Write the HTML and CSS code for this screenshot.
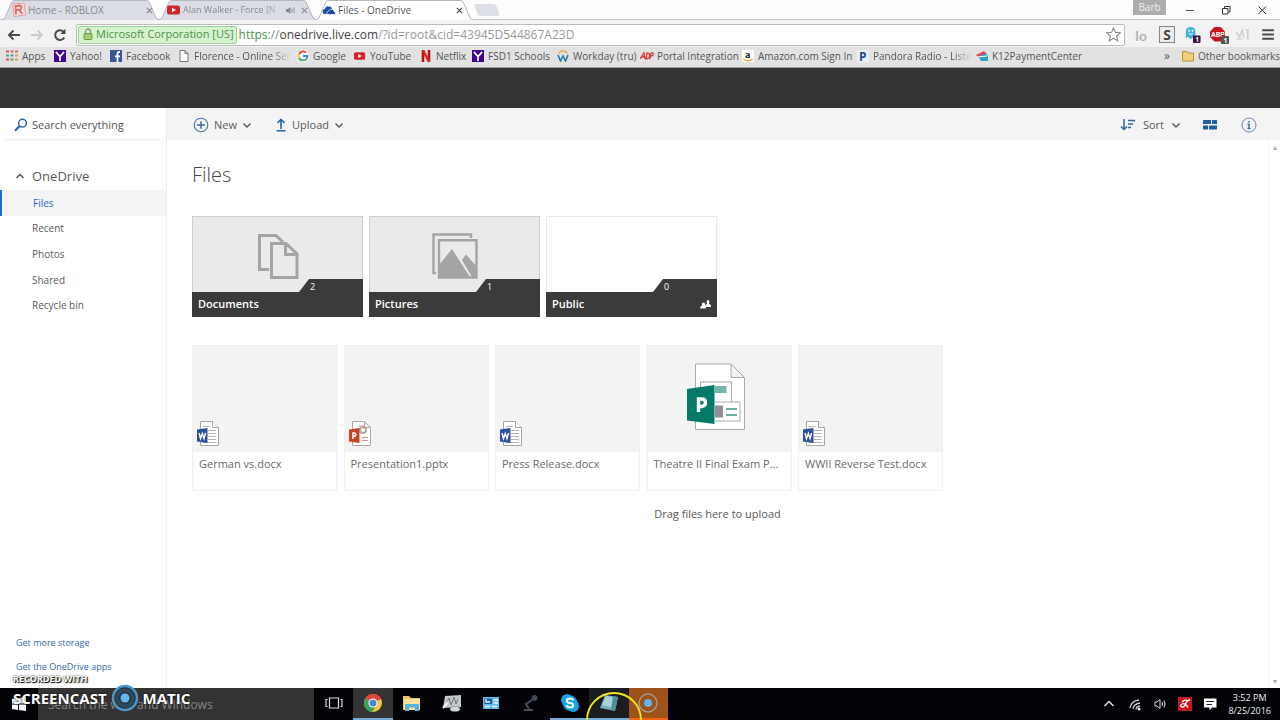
FILE: index.html
```html
<!DOCTYPE html>
<html lang="en">
<head>
<meta charset="utf-8">
<title>Files - OneDrive</title>
<link rel="stylesheet" href="styles.css">
</head>
<body>
<svg class="defs" aria-hidden="true">
  <symbol id="tabshape" viewBox="0 0 160 20" preserveAspectRatio="none"><path d="M0 20 L3 18 L10 2 Q11 .5 13 .5 H147 Q149 .5 150 2 L157 18 L160 20" stroke="#b5b7bb"/></symbol>
  <symbol id="chev" viewBox="0 0 10 10"><path d="M1.500 3.500 L5 7 L8.500 3.500" fill="none" stroke="#555" stroke-width="1.400"/></symbol>
  <symbol id="close" viewBox="0 0 8 8"><path d="M1 1 L7 7 M7 1 L1 7" fill="none" stroke="currentColor" stroke-width="1.300"/></symbol>
  <symbol id="yt" viewBox="0 0 14 12"><rect x="0" y="1.500" width="13" height="9" rx="2" fill="#d0232b"/><path d="M5 3.700 L9 6 L5 8.300 Z" fill="#fff"/></symbol>
  <symbol id="yahoo" viewBox="0 0 13 13"><rect width="13" height="13" fill="#3e0590"/><path d="M2 2 L6.500 7 L11 2 M6.500 7 V12" fill="none" stroke="#fff" stroke-width="1.800"/></symbol>
  <symbol id="word" viewBox="0 0 22 26"><path d="M3.500 .5 H15.500 L21.500 6.500 V24.500 H3.500 Z" fill="#fff" stroke="#a5a5a5"/><path d="M15.500 .5 V6.500 H21.500" fill="#fff" stroke="#a5a5a5"/><path d="M6 5.500 H13 M11 9.500 H19 M11 12.500 H19 M11 15.500 H19 M11 18.500 H19 M6 21.500 H19" stroke="#b5b5b5"/><path d="M0 8.500 L10.500 7 V22 L0 20.500 Z" fill="#2b5099"/><path d="M2 12 L3.500 17.500 L5.300 12.500 L7 17.500 L8.600 12" fill="none" stroke="#fff" stroke-width="1.500"/></symbol>
</svg>

<header class="browser">
  <div class="tabstrip">
    <div class="tab"><svg class="shape"><use href="#tabshape"/></svg>
      <svg class="i14" viewBox="0 0 14 14"><path d="M1 1 L12 0 L13.500 12 L2 13.500 Z" fill="#f8e3e1" stroke="#e39b94"/><path d="M4 11.500 L3.500 3 L8.500 2.500 Q10.500 4 8.500 6.500 L4.500 7 M7 7 L10.500 11" fill="none" stroke="#df6a60" stroke-width="1.800"/></svg>
      <span class="tabtitle">Home - ROBLOX</span><button class="x" aria-label="Close tab"><svg><use href="#close"/></svg></button></div>
    <div class="tab second"><svg class="shape"><use href="#tabshape"/></svg>
      <svg class="i14" viewBox="0 0 14 12"><use href="#yt"/></svg>
      <span class="tabtitle fade">Alan Walker - Force [N</span>
      <svg class="sound" viewBox="0 0 9 9"><path d="M0 3 H2 L4.500 1 V8 L2 6 H0 Z" fill="#888"/><path d="M6 2.500 V6.500 M8 1.500 V7.500" stroke="#999"/></svg>
      <button class="x" aria-label="Close tab"><svg><use href="#close"/></svg></button></div>
    <div class="tab active"><svg class="shape"><use href="#tabshape"/></svg>
      <svg class="i14" viewBox="0 0 14 14"><path d="M1 10 Q-.5 6.500 3 6 Q3.500 2.500 7 3.500 Q10 3.500 10 6 L4.500 11 H2 Z" fill="#1d4fa3"/><path d="M5 11.500 Q4 8.500 6.800 8 Q8 5 10.500 6.500 Q12 7 12 8.500 Q14 9 13.500 11.500 Z" fill="#174ba6" stroke="#fff" stroke-width=".7"/></svg>
      <span class="tabtitle">Files - OneDrive</span><button class="x" aria-label="Close tab"><svg><use href="#close"/></svg></button></div>
    <button class="newtab" aria-label="New tab"></button>
    <div class="winctl">
      <button class="user">Barb</button>
      <button aria-label="Minimize"><svg viewBox="0 0 10 10"><path d="M1 5.500 H9" stroke="#555"/></svg></button>
      <button aria-label="Restore"><svg viewBox="0 0 10 10"><path d="M1.500 3.500 H7 V9 H1.500 Z M3.500 3 V1.500 H9 V7 H7.500" fill="none" stroke="#333"/></svg></button>
      <button aria-label="Close"><svg viewBox="0 0 10 10"><path d="M1.500 1.500 L9 9 M9 1.500 L1.500 9" stroke="#333"/></svg></button>
    </div>
  </div>

  <div class="toolbar">
    <button aria-label="Back"><svg viewBox="0 0 14 14"><path d="M13 7 H2 M6.500 2.500 L2 7 L6.500 11.500" fill="none" stroke="#4a4a4a" stroke-width="2"/></svg></button>
    <button aria-label="Forward"><svg viewBox="0 0 14 14"><path d="M1 7 H12 M7.500 2.500 L12 7 L7.500 11.500" fill="none" stroke="#cbcbcb" stroke-width="1.800"/></svg></button>
    <button aria-label="Reload"><svg viewBox="0 0 14 14"><path d="M11.300 9.500 A4.900 4.900 0 1 1 10.500 3.600" fill="none" stroke="#4a4a4a" stroke-width="2"/><path d="M12.500 .8 V6 H7.300 Z" fill="#4a4a4a"/></svg></button>
    <div class="omnibox">
      <span class="cert"><svg viewBox="0 0 10 12"><path d="M2.500 6 V3.500 Q2.500 1 5 1 T7.500 3.500 V6" fill="none" stroke="#8b9a80" stroke-width="1.300"/><rect x="1" y="5.500" width="8" height="6" rx="1" fill="#a8d06a" stroke="#6b9a4a"/></svg>Microsoft Corporation [US]</span>
      <span class="url"><span class="scheme">https</span><span class="slashes">://</span><span class="host">onedrive.live.com</span>/?id=root&amp;cid=43945D544867A23D</span>
      <svg class="star" viewBox="0 0 14 14"><path d="M7 .8 L8.800 5 L13.300 5.400 L9.900 8.400 L11 12.900 L7 10.500 L3 12.900 L4.100 8.400 L.7 5.400 L5.200 5 Z" fill="#fff" stroke="#888"/></svg>
    </div>
    <div class="ext">
      <svg viewBox="0 0 16 16"><text x="1" y="14" class="t-io">Io</text></svg>
      <svg viewBox="0 0 16 16"><rect x=".5" y=".5" width="14" height="15" fill="#eee" stroke="#888"/><text x="4" y="13" class="t-s">S</text></svg>
      <svg viewBox="0 0 18 18"><path d="M2 13 V5 Q2.500 1 7 1 T12 5 V13 L10 11.500 L7 14 L4 11.500 Z" fill="#45b3dc"/><circle cx="5.500" cy="5" r="1" fill="#fff"/><circle cx="9" cy="5" r="1" fill="#fff"/><path d="M5 8 Q7 10 9.500 8" stroke="#fff" fill="none"/><rect x="9.500" y="10" width="8" height="8" rx="1" fill="#35163f"/><text x="12" y="17" class="t-n">1</text></svg>
      <svg class="abp" viewBox="0 0 20 18"><path d="M5.500 1 H11.500 L16 5.500 V11 L11.500 15.500 H5.500 L1 11 V5.500 Z" fill="#c5161d"/><text x="2" y="11" class="t-abp">ABP</text><rect x="12" y="10" width="8" height="8" rx="1" fill="#4f5650"/><text x="14.500" y="17" class="t-n">1</text></svg>
      <svg viewBox="0 0 16 16"><path d="M2 6 L5 10 L8 4 L9 11 M11 4 Q14 3 12 8 M13 3 V13 M3 12 H8" fill="none" stroke="#cfcfcf" stroke-width="1.500"/></svg>
      <svg viewBox="0 0 16 16"><path d="M3 4 H14 M3 8 H14 M3 12 H14" stroke="#4a4a4a" stroke-width="2"/></svg>
    </div>
  </div>

  <nav class="bookmarks" aria-label="Bookmarks">
    <a href="#"><svg viewBox="0 0 12 12"><path d="M0 1.500 H3 M0 9.500 H3" stroke="#d9534a" stroke-width="2"/><path d="M4.500 1.500 H7.500 M9 1.500 H12" stroke="#d96a63" stroke-width="2"/><path d="M0 5.500 H3 M4.500 9.500 H7.500" stroke="#5aa469" stroke-width="2"/><path d="M4.500 5.500 H7.500" stroke="#5388c9" stroke-width="2"/><path d="M9 5.500 H12 M9 9.500 H12" stroke="#dba348" stroke-width="2"/></svg>Apps</a>
    <a href="#"><svg viewBox="0 0 13 13"><use href="#yahoo"/></svg>Yahoo!</a>
    <a href="#"><svg viewBox="0 0 12 12"><rect width="12" height="12" fill="#3a5795"/><path d="M10 2 H9 Q7.500 2 7.500 3.500 V12 M5 6.300 H10" fill="none" stroke="#fff" stroke-width="1.800"/></svg>Facebook</a>
    <a href="#"><svg viewBox="0 0 12 12"><path d="M2 .5 H7 L10 3.500 V11.500 H2 Z M7 .5 V3.500 H10" fill="#fff" stroke="#777"/></svg><span class="fade">Florence - Online Ser</span></a>
    <a href="#"><svg viewBox="0 0 12 12"><rect width="12" height="12" rx="6" fill="#fff"/><path d="M2 4 A4.500 4.500 0 0 1 9.200 2.700" fill="none" stroke="#e0473c" stroke-width="1.800"/><path d="M2 4 A4.500 4.500 0 0 0 2 8" fill="none" stroke="#efb52a" stroke-width="1.800"/><path d="M2 8 A4.500 4.500 0 0 0 9 9.300" fill="none" stroke="#3ba55a" stroke-width="1.800"/><path d="M9 9.300 Q10.500 8 10.500 6 H6" fill="none" stroke="#4a86e0" stroke-width="1.800"/></svg>Google</a>
    <a href="#"><svg viewBox="0 0 14 12"><use href="#yt"/></svg>YouTube</a>
    <a href="#"><svg viewBox="0 0 12 12"><path d="M3 0 V12 M9 0 V12" stroke="#b3121a" stroke-width="2.600"/><path d="M3 0 L9 12" stroke="#e3222b" stroke-width="2.600"/></svg>Netflix</a>
    <a href="#"><svg viewBox="0 0 13 13"><use href="#yahoo"/></svg>FSD1 Schools</a>
    <a href="#"><svg viewBox="0 0 12 12"><path d="M1.500 3.500 Q6 -2 10.500 3.500" fill="none" stroke="#eda54a" stroke-width="1.500"/><path d="M1 5 L3.500 11 L6 6 L8.500 11 L11 5" fill="none" stroke="#2676ad" stroke-width="1.600"/></svg>Workday (tru)</a>
    <a href="#"><svg class="wide" viewBox="0 0 14 10"><path d="M0 8 L4 2 L5 8 M2 6 H5 M6 8 L7 2 Q11 2 9 7 Z M10 8 L11 2 Q14 1 13 4 Q13 5 11 5" fill="none" stroke="#dd3b40" stroke-width="1.300"/></svg>Portal Integration</a>
    <a href="#"><svg viewBox="0 0 12 12"><rect width="12" height="12" rx="1" fill="#fff"/><text x="3" y="8" class="t-a">a</text><path d="M1 9 Q6 12.500 11 9" fill="none" stroke="#f0a52e" stroke-width="1.300"/></svg>Amazon.com Sign In</a>
    <a href="#"><svg viewBox="0 0 12 12"><rect width="12" height="12" fill="#e8f1f6"/><text x="2" y="11" class="t-p">P</text></svg><span class="fade">Pandora Radio - Liste</span></a>
    <a href="#"><svg viewBox="0 0 12 12"><path d="M0 5 L8 1 L11 4 L3 8 Z" fill="#d94a52"/><path d="M3 7 L9 3 L12 6 V11 H5 Z" fill="#2e9fc4"/><path d="M1 7 L11 6" stroke="#fff"/></svg>K12PaymentCenter</a>
    <button class="more" aria-label="More bookmarks">»</button>
    <a href="#"><svg viewBox="0 0 12 12"><path d="M.5 1.500 H5 L6 3 H11.500 V11 H.5 Z" fill="#f3cf78" stroke="#b8903c"/></svg>Other bookmarks</a>
  </nav>
</header>

<div class="suitebar"></div>

<div class="app">
  <aside class="side">
    <label class="search"><svg viewBox="0 0 14 14"><circle cx="8.500" cy="5.200" r="3.900" fill="none" stroke="#2f62ad" stroke-width="1.500"/><path d="M5.700 8 L1 12.700" stroke="#2f62ad" stroke-width="2"/></svg><input type="text" aria-label="Search everything" placeholder="Search everything"></label>
    <button class="root"><svg viewBox="0 0 10 10"><path d="M1.500 7 L5 3.500 L8.500 7" fill="none" stroke="#555" stroke-width="1.500"/></svg>OneDrive</button>
    <nav class="nav" aria-label="OneDrive">
      <a class="current" href="#">Files</a><a href="#">Recent</a><a href="#">Photos</a><a href="#">Shared</a><a href="#">Recycle bin</a>
    </nav>
    <div class="promo"><a href="#">Get more storage</a><a href="#">Get the OneDrive apps</a></div>
  </aside>

  <main class="main">
    <div class="commands">
      <button><svg class="c16" viewBox="0 0 16 16"><circle cx="8" cy="8" r="6.800" fill="none" stroke="#4775b5" stroke-width="1.100"/><path d="M8 4.200 V11.800 M4.200 8 H11.800" stroke="#3465ac" stroke-width="1.500"/></svg>New<svg class="c10"><use href="#chev"/></svg></button>
      <button><svg class="c12" viewBox="0 0 12 14"><path d="M6 11 V2 M2.500 5 L6 1.500 L9.500 5 M1.500 12.800 H10.500" fill="none" stroke="#2265b5" stroke-width="1.600"/></svg>Upload<svg class="c10"><use href="#chev"/></svg></button>
      <span class="grow"></span>
      <button><svg class="c16" viewBox="0 0 16 14"><path d="M4 1 V11.500 M1 8.500 L4 11.500 L7 8.500 M8 2.500 H15 M8 6 H13 M8 9.500 H11" fill="none" stroke="#2f65ab" stroke-width="1.500"/></svg>Sort<svg class="c10"><use href="#chev"/></svg></button>
      <button aria-label="View"><svg class="c16" viewBox="0 0 16 14"><path d="M1 2 H9 V6 H1 Z M10 2 H15 V6 H10 Z M1 7.500 H6 V11.500 H1 Z M7 7.500 H15 V11.500 H7 Z" fill="#205da8"/></svg></button>
      <button aria-label="Information"><svg class="c16" viewBox="0 0 16 16"><circle cx="8" cy="8" r="7" fill="none" stroke="#6c86ae"/><path d="M8 4 V5.600 M6.500 7.300 H8 V11.500 M6.500 11.500 H9.500" fill="none" stroke="#3465ac" stroke-width="1.400"/></svg></button>
    </div>
    <div class="content">
      <div class="scroll" aria-hidden="true"><span>▴</span><span>▾</span></div>
      <h1>Files</h1>
      <div class="folders">
        <a class="folder" href="#">
          <svg class="art" viewBox="0 0 46 46"><path d="M14 36.500 H4.500 V2.500 H21 L28 9" fill="none" stroke="#a4a4a4" stroke-width="3"/><path d="M16.500 10.500 H31 L42 21 V44.500 H16.500 Z M30.500 10.500 V21.500 H42" fill="#eaeaea" stroke="#a4a4a4" stroke-width="3"/></svg>
          <span class="count">2</span><span class="name">Documents</span></a>
        <a class="folder" href="#">
          <svg class="art" viewBox="0 0 46 46"><path d="M4 40 H1.500 V1.500 H39 V5" fill="none" stroke="#a4a4a4" stroke-width="2.400"/><path d="M7 7.200 H44.500 V44.500 H7 Z" fill="#eaeaea" stroke="#a4a4a4" stroke-width="2.400"/><path d="M7 32 L20 16 L38 44 H7 Z M30 27 L34 21.500 L45 34 V44 H40 Z" fill="#a4a4a4"/></svg>
          <span class="count">1</span><span class="name">Pictures</span></a>
        <a class="folder blank" href="#">
          <span class="count">0</span><span class="name">Public<svg class="people" viewBox="0 0 11 10"><path d="M5 8 Q5 5 7 5 Q6 1 8 1 T9 5 Q11 5 11 8 Z M0 9.500 Q0 7 2 6.500 Q1.500 3.500 3.500 3.500 T5 6.500 Q6 7 6 9.500 Z" fill="#fff"/></svg></span></a>
      </div>
      <div class="files">
        <a class="file" href="#"><span class="thumb"><svg><use href="#word"/></svg></span><span class="fname">German vs.docx</span></a>
        <a class="file" href="#"><span class="thumb"><svg viewBox="0 0 22 26"><path d="M3.500 .5 H15.500 L21.500 6.500 V24.500 H3.500 Z M15.500 .5 V6.500 H21.500" fill="#fff" stroke="#b3a5a2"/><circle cx="14" cy="9" r="3" fill="none" stroke="#b3a5a2" stroke-width="2"/><path d="M10 5 H15 V8 M13 16.500 H19 M13 19.500 H19" fill="none" stroke="#dc9385"/><path d="M0 8.500 L10.500 7 V22 L0 20.500 Z" fill="#c9432b"/><path d="M4 18 V12 H5.800 Q8 13.500 5.800 15.200 H4" fill="none" stroke="#fff" stroke-width="1.500"/></svg></span><span class="fname">Presentation1.pptx</span></a>
        <a class="file" href="#"><span class="thumb"><svg><use href="#word"/></svg></span><span class="fname">Press Release.docx</span></a>
        <a class="file" href="#"><span class="thumb center"><svg viewBox="0 0 58 68"><path d="M8.500 1 H44 L57.500 14.500 V66.500 H8.500 Z M44 1 V14.500 H57.500" fill="#fff" stroke="#aaa"/><path d="M13.500 26 V19 H44.500 V38.500 M28 39 H53 V58 H28" fill="none" stroke="#aaa"/><path d="M28 23 H39.500 V30 H28 Z" fill="#74b7a8"/><path d="M28 42.500 H36 V54.500 H28 Z" fill="#938d96"/><path d="M39 46 H50 M39 52 H50" stroke="#6bb2a2" stroke-width="2"/><path d="M0 26 L27.500 22 V61 L0 57.500 Z" fill="#057a68"/><path d="M11.500 49 V36 H14.500 Q18.500 36 18.500 39.500 T14.500 43.500 H11" fill="none" stroke="#fff" stroke-width="3.400"/></svg></span><span class="fname">Theatre II Final Exam P...</span></a>
        <a class="file" href="#"><span class="thumb"><svg><use href="#word"/></svg></span><span class="fname">WWII Reverse Test.docx</span></a>
      </div>
      <p class="drag">Drag files here to upload</p>
    </div>
  </main>
</div>

<footer class="taskbar">
  <button class="start" aria-label="Start"><svg viewBox="0 0 14 14"><path d="M0 2 L6 1 V6.500 H0 Z M7 1 L14 0 V6.500 H7 Z M0 7.500 H6 V13 L0 12 Z M7 7.500 H14 V14 L7 13 Z" fill="#fff"/></svg></button>
  <input class="tasksearch" type="text" aria-label="Search the web and Windows" placeholder="Search the web and Windows">
  <div class="apps">
    <button aria-label="Task view"><svg viewBox="0 0 20 20"><path d="M5.500 5 H14.500 V15 H5.500 Z M3.500 6.500 H2 V13.500 H3.500 M16.500 6.500 H18 V13.500 H16.500" fill="none" stroke="#ddd" stroke-width="1.200"/></svg></button>
    <button class="open lit" aria-label="Chrome"><svg viewBox="0 0 20 20"><circle cx="10" cy="10" r="9" fill="#f6c83a"/><path d="M10 10 L2.200 5.500 A9 9 0 0 1 18 6 Z" fill="#df4437"/><path d="M10 10 L2.200 5.500 A9 9 0 0 0 9 19 L14 12 Z" fill="#35a35a"/><circle cx="10" cy="10" r="4.600" fill="#fff"/><circle cx="10" cy="10" r="3.500" fill="#4a83dc"/></svg></button>
    <button aria-label="File Explorer"><svg viewBox="0 0 20 20"><path d="M1 3 H7 L9 5 H18 V17 H1 Z" fill="#e9c766"/><path d="M2 6 H18 V17 H2 Z" fill="#fae29b"/><path d="M3 18 V11 H17 V18 H13 V14.500 H7 V18 Z" fill="#55b5df"/></svg></button>
    <button aria-label="System monitor"><svg viewBox="0 0 20 20"><path d="M3 3 L19 2 V14 L1 15 Z" fill="#c5c9cb"/><path d="M4 11 L7 5 L9 12 L12 4 L14 11 L16 6" fill="none" stroke="#70787b"/><ellipse cx="13" cy="16" rx="5" ry="2.500" fill="#d8dbdc" stroke="#777" stroke-width=".6"/><path d="M1 15 L6 9" stroke="#eee" stroke-width="2"/></svg></button>
    <button aria-label="Control panel"><svg viewBox="0 0 20 20"><path d="M2 4 H18 V16 H2 Z" fill="#65b9e8"/><path d="M3.500 5.500 H11 V11 H3.500 Z" fill="#16649e"/><path d="M5 6 V9 H9 M12.500 7 H17 M12.500 10 H17 M4 13.500 H9 M11 13.500 H16" fill="none" stroke="#eaf7ff" stroke-width="1.300"/></svg></button>
    <button aria-label="Microphone"><svg viewBox="0 0 20 20"><circle cx="14.500" cy="5" r="3" fill="#3f4658"/><path d="M12 7 L6 11 L9 16 M4 17 H13" fill="none" stroke="#464d5a" stroke-width="2"/></svg></button>
    <button class="open" aria-label="Skype"><svg viewBox="0 0 20 20"><circle cx="7" cy="7" r="6" fill="#12a5e6"/><circle cx="13" cy="13" r="6" fill="#12a5e6"/><circle cx="10" cy="10" r="7.500" fill="#12a5e6"/><path d="M13.500 7.200 Q12.500 5.500 10 5.500 Q6.800 5.500 6.800 7.800 Q7 9.500 10 10 Q13.500 10.500 13.300 12.300 Q13 14.500 10 14.500 Q7 14.300 6.500 12.300" fill="none" stroke="#fff" stroke-width="2"/></svg></button>
    <button class="open dim" aria-label="Notepad"><svg viewBox="0 0 20 20"><path d="M6 2 L19 4 L16 18 L1 15 Z" fill="#76acbb"/><path d="M7 3 L17 5 L14 15 L3 12 Z" fill="#a9d1d8"/><path d="M14 3 L19 4 L16 18 L12 17 Z" fill="#4f8e9b"/></svg></button>
    <button class="open rec" aria-label="Screen recorder"><svg viewBox="0 0 20 20"><circle cx="10" cy="10" r="9" fill="none" stroke="#a99b92" stroke-width="1.400"/><circle cx="10" cy="10" r="4" fill="#5db5e8"/></svg></button>
  </div>
  <div class="tray">
    <svg viewBox="0 0 14 14"><path d="M2.500 9 L7 4.500 L11.500 9" fill="none" stroke="#ddd" stroke-width="1.500"/></svg>
    <svg viewBox="0 0 14 14"><path d="M2 11 Q3 4 11 3 M5 12 Q5.500 7 12 6 M8 12.500 Q8 9.500 12 9" fill="none" stroke="#ccc" stroke-width="1.300"/><circle cx="11" cy="12" r="1.500" fill="#eee"/></svg>
    <svg viewBox="0 0 14 14"><path d="M2 5 H4 L7 2.500 V11.500 L4 9 H2 Z M9 5 Q10 7 9 9 M11 3.500 Q13 7 11 10.500" fill="none" stroke="#ddd"/></svg>
    <svg viewBox="0 0 14 14"><rect width="14" height="14" fill="#c9151d"/><path d="M12 3 Q9 3 7.500 7 Q6 11 3.500 10 Q1.500 8.500 4 7 Q7 5.500 10 10.500 M4 5 Q7 2 9.500 4" fill="none" stroke="#fff" stroke-width="1.300"/></svg>
    <svg viewBox="0 0 14 14"><path d="M1 1.500 H13.500 V10.500 H9 L6.500 13.500 V10.500 H1 Z" fill="#fff"/><path d="M3.500 4.500 H11 M3.500 7.500 H9" stroke="#222"/></svg>
    <div class="clock"><span>3:52 PM</span><span>8/25/2016</span></div>
  </div>
  <div class="pointer"></div>
  <div class="watermark"><span class="small">RECORDED WITH</span><span class="big">SCREENCAST<svg viewBox="0 0 28 28"><circle cx="14" cy="14" r="12" fill="#253847" stroke="#4d96c8" stroke-width="2.500"/><circle cx="14" cy="14" r="8" fill="none" stroke="#32495a" stroke-width="3"/><circle cx="14" cy="14" r="4.500" fill="#65b7ed"/></svg>MATIC</span></div>
</footer>
</body>
</html>
```
FILE: styles.css
```css
* { box-sizing: border-box; }
html, body { height: 100%; }
body { margin: 0; display: flex; flex-direction: column; overflow: hidden; background: #fff; color: #5a5a5a; font: 11px/16px "Open Sans", "Noto Sans", sans-serif; }
button, input { font: inherit; color: inherit; border: 0; background: none; padding: 0; margin: 0; outline: 0; min-width: 0; }
a { color: inherit; text-decoration: none; }
svg { display: block; flex: none; }
.defs { position: absolute; width: 0; height: 0; }

/* Browser frame */
.browser { flex: none; background: #e2e2e3; border-bottom: 1px solid #999; }
.tabstrip { display: flex; height: 20px; background: #fdfdfd; border-bottom: 1px solid #c6c6c6; padding-left: 2px; }
.tab { position: relative; display: flex; align-items: center; gap: 2px; width: 157px; height: 20px; padding: 0 6px 0 10px; color: #8a8a8c; }
.tab > * { position: relative; }
.tab .shape { position: absolute; inset: 0; width: 100%; height: 20px; fill: #dadde5; }
.tab.active .shape { fill: #fff; }
.tab.active { color: #555; padding-right: 10px; padding-left: 6px; }
.tab.active .x { color: #444; }
.tab.second { padding: 0 8px; }
.i14 { width: 14px; height: 14px; }
.tabtitle { flex: 1; min-width: 0; overflow: hidden; white-space: nowrap; font-size: 10px; }
.fade { overflow: hidden; white-space: nowrap; min-width: 0; -webkit-mask-image: linear-gradient(90deg, #000 80%, transparent); mask-image: linear-gradient(90deg, #000 80%, transparent); }
.second .tabtitle { font-size: 9px; }
.sound { width: 9px; height: 9px; margin-right: 4px; }
.x { color: #888; }
.x svg { width: 7px; height: 7px; }
.newtab { width: 22px; height: 12px; margin: 4px 0 0 3px; background: #dcdfe6; border-radius: 3px; transform: skewX(20deg); }
.winctl { margin-left: auto; display: flex; align-items: center; }
.winctl button { width: 36px; display: flex; justify-content: center; }
.winctl svg { width: 10px; height: 10px; }
.winctl .user { width: 33px; height: 15px; margin-right: 6px; align-self: flex-start; background: #adadad; color: #eee; font-size: 10px; line-height: 14px; }

.toolbar { display: flex; align-items: center; height: 27px; padding: 2px 4px 0 7px; gap: 9px; background: #f2f2f2; }
.toolbar > button svg { width: 14px; height: 14px; }
.omnibox { flex: 1; display: flex; align-items: center; height: 22px; background: #fff; border: 1px solid #bbb; border-radius: 2px; padding: 0 3px 0 1px; }
.cert { display: flex; align-items: center; gap: 3px; height: 18px; padding: 0 2px 1px 4px; border: 1px solid #9ccf96; border-radius: 2px; background: #d5f3ce; color: #4b914a; white-space: nowrap; }
.cert svg { width: 10px; height: 12px; }
.url { flex: 1; margin-left: 2px; font-size: 12px; color: #999; }
.scheme { color: #4b914a; }
.slashes { color: #888; }
.host { color: #444; }
.star { width: 15px; height: 15px; }
.ext { display: flex; align-items: center; gap: 8px; }
.ext svg { width: 17px; height: 17px; }
.ext .abp { width: 20px; height: 18px; margin-right: -3px; }
.t-io { font: bold 13px Lato, sans-serif; fill: #b5b5b5; }
.t-s { font: bold 13px "Open Sans", sans-serif; fill: #444; }
.t-n { font: bold 7px "Open Sans", sans-serif; fill: #fff; }
.t-abp { font: bold 7px Roboto, sans-serif; fill: #fff; }
.t-a { font: bold 9px "Open Sans", sans-serif; fill: #111; }
.t-p { font: bold 12px "Open Sans", sans-serif; fill: #234a7d; }

.bookmarks { display: grid; grid-template-columns: 48px 56px 68px 119px 57px 66px 52px 85px 83px 102px 115px 119px 1fr 18px 98px; align-items: center; height: 20px; padding: 0 0 2px 6px; color: #555; font-size: 10px; white-space: nowrap; overflow: hidden; }
.bookmarks a { display: flex; align-items: center; gap: 4px; min-width: 0; }
.bookmarks svg { width: 12px; height: 12px; }
.bookmarks .wide { width: 14px; margin-right: -1px; }
.more { text-align: left; font-size: 12px; }

.suitebar { flex: none; height: 40px; background: #333; }

/* OneDrive */
.app { flex: 1; display: flex; min-height: 0; }
.side { width: 167px; flex: none; display: flex; flex-direction: column; border-right: 1px solid #ececec; }
.search { display: flex; align-items: center; gap: 4px; height: 32px; margin: 0 6px 0 5px; padding: 2px 0 0 9px; border-bottom: 1px solid #ededed; }
.search svg { width: 14px; height: 14px; }
.search input { flex: 1; }
.search input::placeholder { color: #555; opacity: 1; }
.root { display: flex; align-items: center; gap: 7px; margin-top: 26px; padding-left: 15px; height: 20px; font-size: 13px; }
.root svg { width: 10px; height: 10px; }
.nav { display: grid; grid-auto-rows: 1fr; height: 128px; margin-top: 4px; font-size: 10px; }
.nav a { display: flex; align-items: center; padding-left: 32px; }
.nav .current { background: #f4f4f4; border-left: 2px solid #1b6fd0; padding-left: 31px; color: #1b6fc6; }
.promo { margin-top: auto; display: flex; flex-direction: column; gap: 8px; padding: 0 0 13px 16px; font-size: 9px; color: #3565ad; }

.main { flex: 1; display: flex; flex-direction: column; min-width: 0; }
.commands { display: flex; align-items: center; gap: 23px; height: 32px; padding: 1px 23px 0 26px; background: #f4f4f4; }
.commands button { display: flex; align-items: center; gap: 5px; }
.commands button:nth-last-child(3) { gap: 7px; margin-right: -2px; }
.grow { flex: 1; }
.c16 { width: 16px; height: 16px; }
.c12 { width: 12px; height: 14px; }
.c10 { width: 10px; height: 10px; }
.content { position: relative; flex: 1; padding: 20px 12px 0 25px; }
.scroll { position: absolute; top: 0; right: 0; bottom: 0; width: 12px; display: flex; flex-direction: column; justify-content: space-between; align-items: center; border-left: 1px solid #f4f4f4; color: #aaa; font-size: 8px; line-height: 14px; }
h1 { margin: 0; font-size: 20px; line-height: 30px; font-weight: 300; color: #444; }
.folders { display: flex; flex-wrap: wrap; gap: 6px; margin-top: 26px; }
.folder { position: relative; width: 171px; height: 101px; display: flex; flex-direction: column; justify-content: flex-end; background: #eaeaea; border: 1px solid #cfcfcf; border-bottom: 0; color: #fff; }
.folder.blank { background: #fff; border-color: #e9e9e9; }
.art { width: 46px; height: 46px; margin: 0 auto; }
.count { align-self: flex-end; width: 64px; height: 13px; margin-right: -1px; padding-left: 11px; background: #3b3b3b; clip-path: polygon(10px 0, 100% 0, 100% 100%, 0 100%); font-size: 9px; line-height: 15px; }
.name { display: flex; align-items: center; justify-content: space-between; height: 25px; margin: 0 -1px; padding: 0 6px 2px; background: #3b3b3b; font-weight: 600; }
.people { width: 11px; height: 10px; }
.files { display: flex; flex-wrap: wrap; justify-content: space-between; gap: 6px; max-width: 751px; margin-top: 28px; }
.file { width: 145px; height: 146px; border: 1px solid #f0f0f0; }
.thumb { display: flex; align-items: flex-end; height: 106px; padding: 0 4px 5px; background: #f3f3f3; }
.thumb svg { width: 22px; height: 26px; }
.thumb.center { align-items: center; justify-content: center; padding: 0 6px 5px 0; }
.thumb.center svg { width: 58px; height: 68px; }
.fname { display: block; padding: 4px 6px 0; white-space: nowrap; color: #6a6a6a; }
.drag { margin: 15px 0 0 -25px; text-align: center; }

/* Taskbar */
.taskbar { position: relative; flex: none; display: flex; height: 32px; background: #020207; color: #eee; }
.start { width: 38px; display: flex; align-items: center; justify-content: center; }
.start svg { width: 14px; height: 14px; }
.tasksearch { width: 276px; padding: 2px 0 0 10px; background: #333; font-size: 12px; }
.tasksearch::placeholder { color: #858585; opacity: 1; }
.apps { display: grid; grid-template-columns: repeat(9, 1fr); width: 354px; }
.apps button { display: flex; align-items: center; justify-content: center; border-bottom: 2px solid transparent; }
.apps svg { width: 20px; height: 20px; }
.apps .open { border-bottom-color: #75a9d8; }
.apps .lit { background: #343434; }
.apps .dim { background: #1b1d20; }
.apps .rec { background: #9c5218; border-bottom-color: #f26313; }
.tray { margin-left: auto; display: flex; align-items: center; gap: 11px; padding-right: 9px; }
.tray svg { width: 14px; height: 14px; }
.tray > svg:first-child { margin-right: 1px; }
.clock { display: flex; flex-direction: column; align-items: center; line-height: 13px; font-size: 9px; }
.pointer { position: absolute; left: 586px; bottom: -28px; width: 56px; height: 56px; border: 2px solid #eee51c; border-radius: 50%; clip-path: inset(0 0 28px 0); }
.watermark { position: absolute; left: 13px; top: -16px; display: flex; flex-direction: column; pointer-events: none; color: #fff; font-weight: 700; white-space: nowrap; }
.watermark .small { height: 12px; font-size: 9px; line-height: 14px; text-shadow: 0 0 2px #000, 1px 1px 1px #000; }
.watermark .big { display: flex; align-items: center; gap: 4px; font-size: 15px; line-height: 26px; text-shadow: 0 0 2px #000; }
.watermark svg { width: 28px; height: 28px; }
```
